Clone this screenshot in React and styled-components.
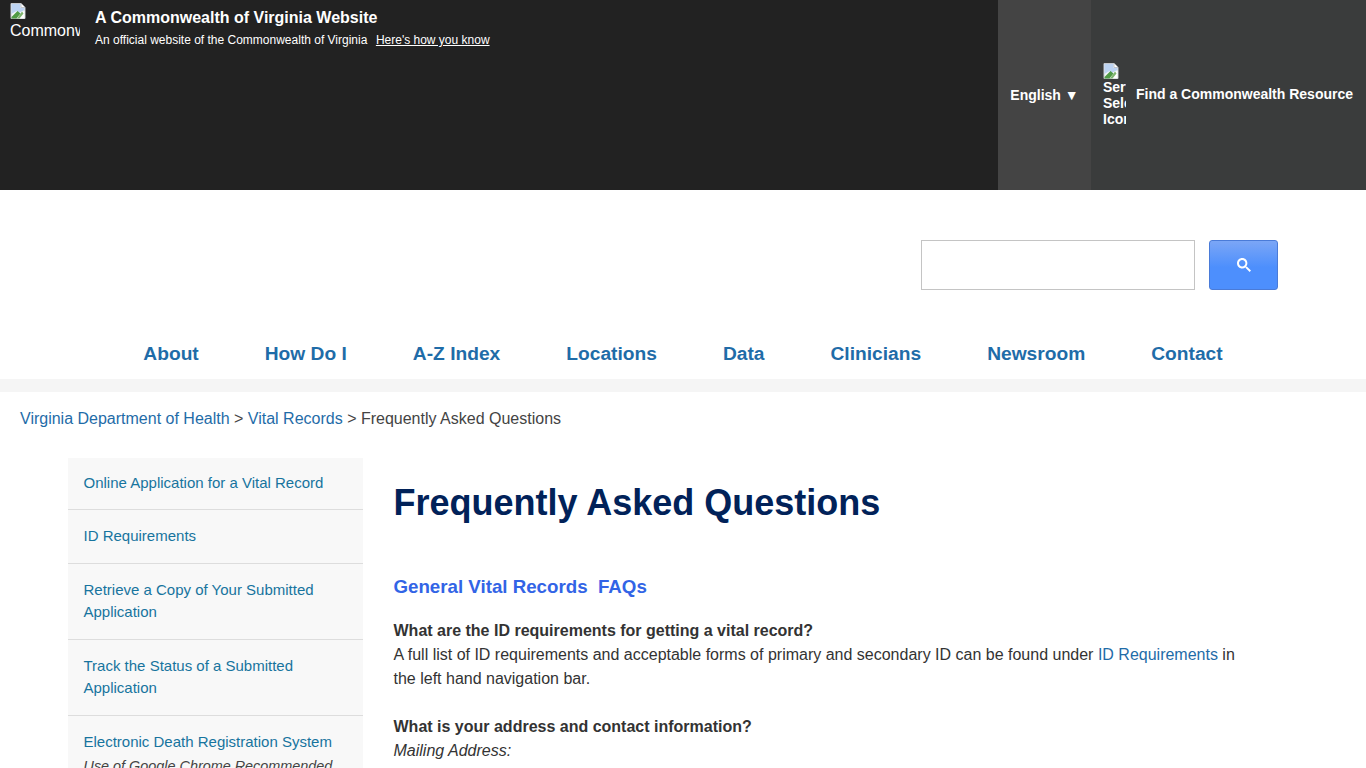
import styled, { createGlobalStyle } from 'styled-components';

const GlobalStyle = createGlobalStyle`
  html, body {
    margin: 0;
    padding: 0;
    height: 768px;
    overflow: hidden;
    background: #fff;
    font-family: "Liberation Sans", Arial, sans-serif;
    color: #333;
  }
  a { text-decoration: none; }
`;

const TopBar = styled.div`
  display: flex;
  height: 190px;
  background: #222;
  color: #fff;
`;

const BannerLeft = styled.div`
  flex: 1;
  display: flex;
  padding: 3px 0 0 10px;
`;

const BrokenImage = styled.div`
  width: ${(p) => p.$width}px;
  height: ${(p) => p.$height}px;
  overflow: hidden;
  flex-shrink: 0;
  font-size: ${(p) => p.$size}px;
  line-height: ${(p) => p.$line}px;
  font-weight: ${(p) => p.$weight || 400};
  white-space: nowrap;
  svg { display: block; margin-bottom: ${(p) => p.$gap || 0}px; }
`;

const BannerText = styled.div`
  margin-left: 15px;
`;

const BannerTitle = styled.div`
  font-size: 16px;
  font-weight: 700;
  line-height: 18px;
  margin-top: 6px;
`;

const BannerSub = styled.div`
  font-size: 12px;
  line-height: 14px;
  margin-top: 6px;
  a { color: #fff; text-decoration: underline; margin-left: 8.5px; }
`;

const LangPanel = styled.div`
  width: 93px;
  background: #444;
  display: flex;
  align-items: center;
  justify-content: center;
  font-size: 14px;
  font-weight: 700;
`;

const ResourcePanel = styled.div`
  width: 275px;
  background: #3a3c3c;
  display: flex;
  align-items: center;
  padding-left: 12px;
  box-sizing: border-box;
  font-size: 14px;
  font-weight: 700;
  gap: 10px;
`;

const ResourceLabel = styled.span`
  margin-top: -2px;
`;

const SearchRow = styled.div`
  display: flex;
  justify-content: flex-end;
  gap: 14px;
  padding: 50px 88px 0 0;
`;

const SearchInput = styled.div`
  width: 274px;
  height: 50px;
  box-sizing: border-box;
  border: 1px solid #c4c4c4;
  background: #fff;
`;

const SearchButton = styled.div`
  width: 69px;
  height: 50px;
  box-sizing: border-box;
  border: 1px solid #4a7bd8;
  border-radius: 3px;
  background: linear-gradient(#7ba6f6, #4d8ffd 55%, #4d8ffd);
  display: flex;
  align-items: center;
  justify-content: center;
`;

const Nav = styled.nav`
  display: flex;
  justify-content: center;
  gap: 66px;
  margin-top: 52px;
  height: 37px;
  border-bottom: 13px solid #f5f5f5;
`;

const NavLink = styled.a`
  font-size: 19.2px;
  font-weight: 700;
  line-height: 24px;
  color: #1f6ca8;
`;

const Crumbs = styled.div`
  padding: 18px 0 0 20px;
  font-size: 16px;
  line-height: 18px;
  color: #444;
  a { color: #1f6ca8; }
`;

const Main = styled.div`
  display: flex;
  margin-top: 30px;
  padding-left: 68px;
`;

const Sidebar = styled.ul`
  list-style: none;
  margin: 0;
  padding: 0;
  width: 295px;
  flex-shrink: 0;
  background: #f8f8f8;
`;

const SideItem = styled.li`
  padding: 15px 15px 16px 15.5px;
  border-bottom: 1px solid #ddd;
  font-size: 15px;
  line-height: 22px;
  color: #17749e;
  &:first-child { padding-top: 14px; padding-bottom: 15px; }
`;

const SideNote = styled.div`
  margin-top: 2px;
  font-size: 14.4px;
  font-style: italic;
  color: #444;
  white-space: nowrap;
`;

const Content = styled.div`
  margin-left: 30.5px;
  width: 850px;
`;

const Title = styled.h1`
  margin: 24px 0 0;
  font-size: 36px;
  line-height: 42px;
  font-weight: 700;
  color: #012259;
`;

const SectionHeading = styled.h2`
  margin: 51px 0 0;
  font-size: 18.72px;
  line-height: 24px;
  font-weight: 700;
  color: #3264e6;
  white-space: pre;
`;

const Paragraph = styled.p`
  margin: ${(p) => p.$top}px 0 0;
  font-size: 16px;
  line-height: 24px;
  color: #333;
  a { color: #1f6ca8; }
`;

const BrokenIcon = () => (
  <svg width="16" height="16" viewBox="0 0 16 16">
    <path d="M1 0.5h10l4 4v11H1z" fill="#f4f6f8" stroke="#c3c7cc" />
    <path d="M1.5 1h9v4h4v2l-6 3-2-2-5 3z" fill="#bcd3f2" />
    <path d="M1.5 14l6-6 3 2.5-4 5H1.5z" fill="#4f9a45" />
    <path d="M14.5 7.5l-7 8h7z" fill="#fff" />
    <path d="M12 8.5l-5 7h2.5l4-5z" fill="#7fb56f" />
    <path d="M11 0.5v4h4" fill="#fff" stroke="#c3c7cc" />
  </svg>
);

const SearchIcon = () => (
  <svg width="14" height="14" viewBox="0 0 13 13">
    <path d="m4.8495 7.8226c0.82666 0 1.5262-0.29146 2.0985-0.87438 0.57232-0.58292 0.86378-1.2877 0.87438-2.1144 0.010599-0.82666-0.28086-1.5262-0.87438-2.0985-0.59352-0.57232-1.293-0.86378-2.0985-0.87438-0.8055-0.010599-1.5103 0.28086-2.1144 0.87438-0.60414 0.59352-0.8956 1.293-0.87438 2.0985 0.021197 0.8055 0.31266 1.5103 0.87438 2.1144 0.56172 0.60414 1.2665 0.8956 2.1144 0.87438zm4.4695 0.2115 3.681 3.6819-1.259 1.284-3.6817-3.7 0.0019784-0.69479-0.090043-0.098846c-0.87973 0.76087-1.92 1.1413-3.1207 1.1413-1.3553 0-2.5025-0.46363-3.4417-1.3909s-1.4088-2.0686-1.4088-3.4239c0-1.3553 0.4696-2.4966 1.4088-3.4239 0.9392-0.92727 2.0864-1.3969 3.4417-1.4088 1.3553-0.011889 2.4906 0.45771 3.406 1.4088 0.9154 0.95107 1.379 2.0924 1.3909 3.4239 0 1.2126-0.38043 2.2588-1.1413 3.1385l0.098834 0.090049z" fill="#fff" />
  </svg>
);

const navItems = ['About', 'How Do I', 'A-Z Index', 'Locations', 'Data', 'Clinicians', 'Newsroom', 'Contact'];

const sideItems = [
  'Online Application for a Vital Record',
  'ID Requirements',
  'Retrieve a Copy of Your Submitted Application',
  'Track the Status of a Submitted Application',
];

export default function App() {
  return (
    <>
      <GlobalStyle />
      <TopBar>
        <BannerLeft>
          <BrokenImage $width={70} $height={40} $size={16} $line={18} $gap={3}>
            <BrokenIcon />
            Commonwealth
          </BrokenImage>
          <BannerText>
            <BannerTitle>A Commonwealth of Virginia Website</BannerTitle>
            <BannerSub>
              An official website of the Commonwealth of Virginia
              <a href="#how">Here's how you know</a>
            </BannerSub>
          </BannerText>
        </BannerLeft>
        <LangPanel>English ▼</LangPanel>
        <ResourcePanel>
          <BrokenImage $width={23} $height={64} $size={14} $line={16} $weight={700}>
            <BrokenIcon />
            Service<br />Select<br />Icon
          </BrokenImage>
          <ResourceLabel>Find a Commonwealth Resource</ResourceLabel>
        </ResourcePanel>
      </TopBar>
      <SearchRow>
        <SearchInput />
        <SearchButton><SearchIcon /></SearchButton>
      </SearchRow>
      <Nav>
        {navItems.map((item) => <NavLink key={item}>{item}</NavLink>)}
      </Nav>
      <Crumbs>
        <a href="#vdh">Virginia Department of Health</a> &gt; <a href="#vr">Vital Records</a> &gt; Frequently Asked Questions
      </Crumbs>
      <Main>
        <Sidebar>
          {sideItems.map((item) => <SideItem key={item}>{item}</SideItem>)}
          <SideItem>
            Electronic Death Registration System
            <SideNote>Use of Google Chrome Recommended</SideNote>
          </SideItem>
        </Sidebar>
        <Content>
          <Title>Frequently Asked Questions</Title>
          <SectionHeading>General Vital Records  FAQs</SectionHeading>
          <Paragraph $top={20}>
            <strong>What are the ID requirements for getting a vital record?</strong><br />
            A full list of ID requirements and acceptable forms of primary and secondary ID can be found under <a href="#id">ID Requirements</a> in the left hand navigation bar.
          </Paragraph>
          <Paragraph $top={24}>
            <strong>What is your address and contact information?</strong><br />
            <em>Mailing Address:</em>
          </Paragraph>
        </Content>
      </Main>
    </>
  );
}
